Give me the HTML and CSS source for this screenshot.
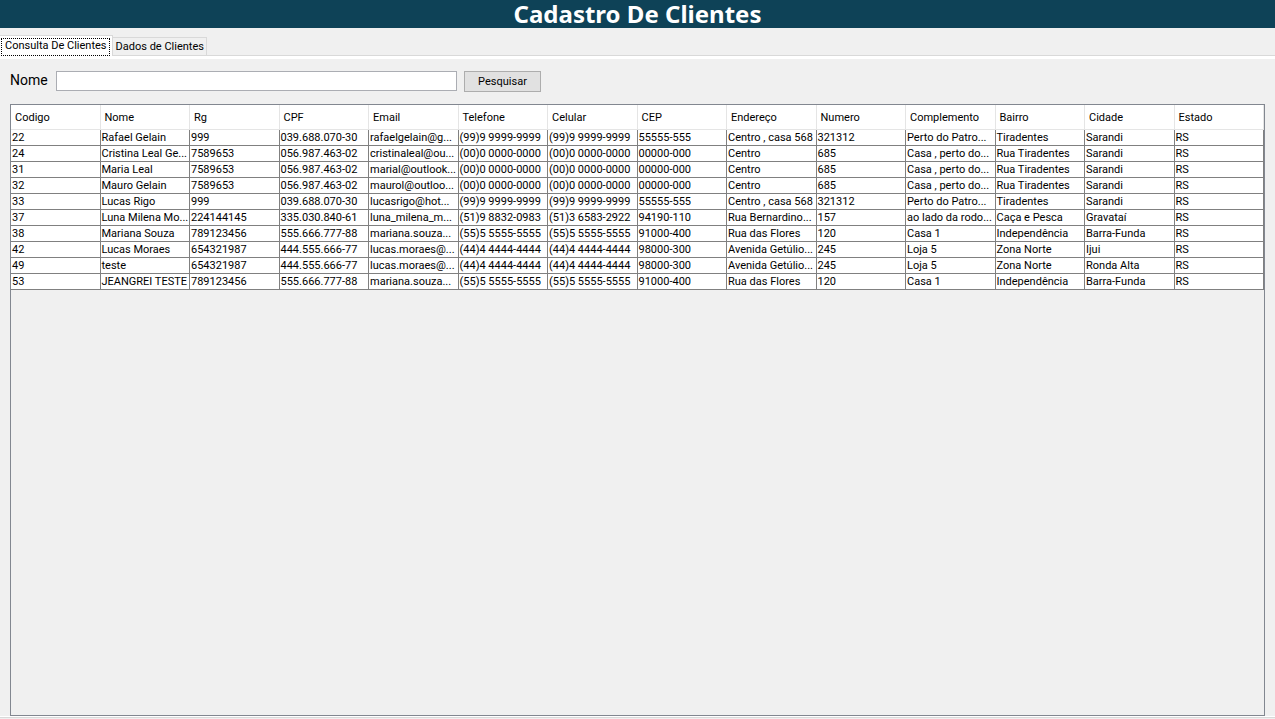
FILE: index.html
```html
<!DOCTYPE html>
<html lang="pt-BR">
<head>
<meta charset="utf-8">
<title>Cadastro De Clientes</title>
<link rel="stylesheet" href="styles.css">
</head>
<body>
<header class="title-bar"><h1 class="title">Cadastro De Clientes</h1></header>
<nav class="tabs" role="tablist">
<button class="tab tab-active" type="button" role="tab" aria-selected="true"><span class="tab-label">Consulta De Clientes</span></button>
<button class="tab" type="button" role="tab" aria-selected="false">Dados de Clientes</button>
</nav>
<main class="panel">
<form class="search">
<label class="search-label" for="nome">Nome</label>
<input class="search-input" id="nome" type="text">
<button class="search-button" type="button">Pesquisar</button>
</form>
<div class="grid-frame">
<table class="grid">
<thead><tr><th>Codigo</th><th>Nome</th><th>Rg</th><th>CPF</th><th>Email</th><th>Telefone</th><th>Celular</th><th>CEP</th><th>Endereço</th><th>Numero</th><th>Complemento</th><th>Bairro</th><th>Cidade</th><th>Estado</th></tr></thead>
<tbody>
<tr><td>22</td><td>Rafael Gelain</td><td>999</td><td>039.688.070-30</td><td>rafaelgelain@g...</td><td>(99)9 9999-9999</td><td>(99)9 9999-9999</td><td>55555-555</td><td>Centro , casa 568</td><td>321312</td><td>Perto do Patro...</td><td>Tiradentes</td><td>Sarandi</td><td>RS</td></tr>
<tr><td>24</td><td>Cristina Leal Ge...</td><td>7589653</td><td>056.987.463-02</td><td>cristinaleal@ou...</td><td>(00)0 0000-0000</td><td>(00)0 0000-0000</td><td>00000-000</td><td>Centro</td><td>685</td><td>Casa , perto do...</td><td>Rua Tiradentes</td><td>Sarandi</td><td>RS</td></tr>
<tr><td>31</td><td>Maria Leal</td><td>7589653</td><td>056.987.463-02</td><td>marial@outlook...</td><td>(00)0 0000-0000</td><td>(00)0 0000-0000</td><td>00000-000</td><td>Centro</td><td>685</td><td>Casa , perto do...</td><td>Rua Tiradentes</td><td>Sarandi</td><td>RS</td></tr>
<tr><td>32</td><td>Mauro Gelain</td><td>7589653</td><td>056.987.463-02</td><td>maurol@outloo...</td><td>(00)0 0000-0000</td><td>(00)0 0000-0000</td><td>00000-000</td><td>Centro</td><td>685</td><td>Casa , perto do...</td><td>Rua Tiradentes</td><td>Sarandi</td><td>RS</td></tr>
<tr><td>33</td><td>Lucas Rigo</td><td>999</td><td>039.688.070-30</td><td>lucasrigo@hot...</td><td>(99)9 9999-9999</td><td>(99)9 9999-9999</td><td>55555-555</td><td>Centro , casa 568</td><td>321312</td><td>Perto do Patro...</td><td>Tiradentes</td><td>Sarandi</td><td>RS</td></tr>
<tr><td>37</td><td>Luna Milena Mo...</td><td>224144145</td><td>335.030.840-61</td><td>luna_milena_m...</td><td>(51)9 8832-0983</td><td>(51)3 6583-2922</td><td>94190-110</td><td>Rua Bernardino...</td><td>157</td><td>ao lado da rodo...</td><td>Caça e Pesca</td><td>Gravataí</td><td>RS</td></tr>
<tr><td>38</td><td>Mariana Souza</td><td>789123456</td><td>555.666.777-88</td><td>mariana.souza...</td><td>(55)5 5555-5555</td><td>(55)5 5555-5555</td><td>91000-400</td><td>Rua das Flores</td><td>120</td><td>Casa 1</td><td>Independência</td><td>Barra-Funda</td><td>RS</td></tr>
<tr><td>42</td><td>Lucas Moraes</td><td>654321987</td><td>444.555.666-77</td><td>lucas.moraes@...</td><td>(44)4 4444-4444</td><td>(44)4 4444-4444</td><td>98000-300</td><td>Avenida Getúlio...</td><td>245</td><td>Loja 5</td><td>Zona Norte</td><td>Ijui</td><td>RS</td></tr>
<tr><td>49</td><td>teste</td><td>654321987</td><td>444.555.666-77</td><td>lucas.moraes@...</td><td>(44)4 4444-4444</td><td>(44)4 4444-4444</td><td>98000-300</td><td>Avenida Getúlio...</td><td>245</td><td>Loja 5</td><td>Zona Norte</td><td>Ronda Alta</td><td>RS</td></tr>
<tr><td>53</td><td>JEANGREI TESTE</td><td>789123456</td><td>555.666.777-88</td><td>mariana.souza...</td><td>(55)5 5555-5555</td><td>(55)5 5555-5555</td><td>91000-400</td><td>Rua das Flores</td><td>120</td><td>Casa 1</td><td>Independência</td><td>Barra-Funda</td><td>RS</td></tr>
</tbody>
</table>
</div>
</main>
<footer class="bottom-edge"></footer>
</body>
</html>
```
FILE: styles.css
```css
* {
  box-sizing: border-box;
}

body {
  margin: 0;
  min-height: 100vh;
  display: flex;
  flex-direction: column;
  background: #f0f0f0;
  color: #000;
  font-family: Tahoma, Roboto, "Open Sans", sans-serif;
  font-size: 11px;
}

button,
input {
  font: inherit;
  color: inherit;
}

.title-bar {
  background: #0e4257;
}

.title {
  margin: 0;
  color: #fff;
  font-family: Tahoma, "Noto Sans", sans-serif;
  font-size: 24px;
  line-height: 28px;
  text-align: center;
}

.tabs {
  display: flex;
  align-items: flex-end;
  padding-top: 7px;
  border-bottom: 3px solid #fff;
  box-shadow: inset 0 -1px #d9d9d9;
}

.tab {
  height: 19px;
  padding: 1px 2px 0 3px;
  border: 1px solid #d9d9d9;
  border-left: 0;
  background: #f0f0f0;
  line-height: 16px;
  white-space: nowrap;
}

.tab-active {
  height: 21px;
  padding: 1px 2px 0 1px;
  border-bottom: 0;
  background: #fff;
}

.tab-label {
  display: block;
  height: 18px;
  padding: 0 2px 0 3px;
  border: 1px dotted #000;
  line-height: 14px;
}

.panel {
  flex: 1;
  display: flex;
  flex-direction: column;
  padding: 11px 10px 0;
}

.search {
  display: flex;
  align-items: center;
  height: 22px;
}

.search-label {
  width: 46px;
  padding-bottom: 2px;
  font-size: 14px;
  line-height: 20px;
}

.search-input {
  width: 401px;
  height: 20px;
  margin-right: 7px;
  padding: 0 2px;
  border: 1px solid #abadb3;
  background: #fff;
}

.search-button {
  width: 77px;
  height: 21px;
  padding: 1px 0 0;
  border: 1px solid #adadad;
  background: #e1e1e1;
  line-height: 18px;
}

.grid-frame {
  flex: 1;
  margin-top: 12px;
  border: 1px solid #828790;
}

.grid {
  width: 100%;
  table-layout: fixed;
  border-collapse: separate;
  border-spacing: 0;
  background: #fff;
}

.grid th,
.grid td {
  overflow: hidden;
  text-align: left;
  white-space: nowrap;
}

.grid th {
  height: 25px;
  padding: 2px 4px 0;
  border-right: 1px solid #e5e5e5;
  border-bottom: 1px solid #e5e5e5;
  font-weight: 400;
  line-height: 22px;
}

.grid td {
  height: 16px;
  padding: 0 0 0 1px;
  border-right: 1px solid #808080;
  border-bottom: 1px solid #808080;
  line-height: 15px;
}

.bottom-edge {
  height: 3px;
  border-top: 1px solid #fff;
  border-bottom: 1px solid #f0f0f0;
  background: #d9d9d9;
}
```
